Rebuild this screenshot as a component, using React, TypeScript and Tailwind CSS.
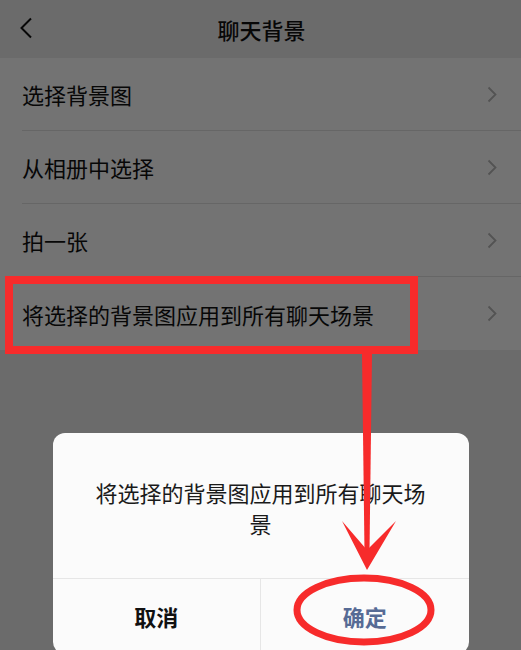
import React from 'react';

const font = { fontFamily: '"Noto Sans CJK SC", "Noto Sans", sans-serif' };

const options = ['选择背景图', '从相册中选择', '拍一张', '将选择的背景图应用到所有聊天场景'];

const Chevron = () => (
  <svg width="10" height="17" viewBox="0 0 10 17" fill="none">
    <path d="M1.5 1.5 L8.5 8.5 L1.5 15.5" stroke="#b8b8b8" strokeWidth="1.8" />
  </svg>
);

const BackIcon = () => (
  <svg width="14" height="22" viewBox="0 0 14 22" fill="none">
    <path d="M12 1.5 L2.5 11 L12 20.5" stroke="#111" strokeWidth="2" />
  </svg>
);

const ChatBackgroundPage = () => {
  return (
    <div className="relative w-[521px] h-[650px] overflow-hidden bg-[#ededed]" style={font}>
      <div className="relative h-[58px] flex items-center justify-center">
        <div className="absolute left-[19px] top-[17px]">
          <BackIcon />
        </div>
        <h1 className="text-[22px] font-medium text-[#111] pl-[2px]">聊天背景</h1>
      </div>

      <div className="bg-white">
        {options.map((label, i) => (
          <div key={label} className="pl-[22px]">
            <div
              className={`h-[73px] flex items-center justify-between pr-[24px] ${
                i < options.length - 1 ? 'border-b border-[#e3e3e3]' : ''
              }`}
            >
              <span className="text-[22px] text-[#111] leading-none">{label}</span>
              <Chevron />
            </div>
          </div>
        ))}
      </div>

      {/* dimmed mask + confirm dialog */}
      <div className="absolute inset-0 bg-black/[0.55] flex flex-col items-center pt-[433px]">
        <div className="w-[416px] bg-[#fbfbfb] rounded-[12px] overflow-hidden shrink-0">
          <div className="h-[145px] flex items-center justify-center px-[40px] pt-[4px]">
            <p className="text-[22px] leading-[31px] text-[#1a1a1a] text-center">
              将选择的背景图应用到所有聊天场景
            </p>
          </div>
          <div className="flex h-[76px] border-t border-[#e6e6e6]">
            <button className="flex-1 flex items-center justify-center text-[22px] font-bold text-[#111] border-r border-[#e6e6e6]">
              取消
            </button>
            <button className="flex-1 flex items-center justify-center text-[22px] font-bold text-[#576b95]">
              确定
            </button>
          </div>
        </div>
      </div>

      {/* red markup on top */}
      <svg className="absolute inset-0 pointer-events-none" width="521" height="650" viewBox="0 0 521 650">
        <rect x="9" y="280" width="405" height="70" fill="none" stroke="#f72b2b" strokeWidth="8" />
        <path d="M362 354 L372 354 L369.5 552 L364.5 552 Z" fill="#f72b2b" />
        <path d="M342 521 L367 550 L396 521 L367 570 Z" fill="#f72b2b" />
        <ellipse cx="364" cy="610" rx="67" ry="32" fill="none" stroke="#f72b2b" strokeWidth="7" />
      </svg>
    </div>
  );
};

export default function App() {
  return <ChatBackgroundPage />;
}
